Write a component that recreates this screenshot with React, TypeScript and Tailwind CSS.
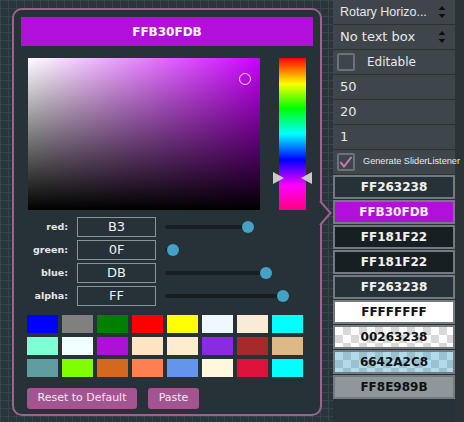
import React from 'react'

const swatches = [
  ['#0000ff', '#808080', '#008000', '#ff0000', '#ffff00', '#f0f8ff', '#faebd7', '#00ffff'],
  ['#7fffd4', '#f0ffff', '#ad10d6', '#ffe4c4', '#ffebcd', '#8a2be2', '#a52a2a', '#deb887'],
  ['#5f9ea0', '#7fff00', '#d2691e', '#ff7f50', '#6495ed', '#fff8dc', '#dc143c', '#00ffff'],
]

const channels = [
  { label: 'red:', value: 'B3', n: 0xb3 },
  { label: 'green:', value: '0F', n: 0x0f },
  { label: 'blue:', value: 'DB', n: 0xdb },
  { label: 'alpha:', value: 'FF', n: 0xff },
]

const items = [
  { text: 'FF263238', cls: 'bg-[#263238] text-[#f2f2f2]' },
  { text: 'FFB30FDB', cls: 'bg-[#b30fdb] text-[#f2f2f2]' },
  { text: 'FF181F22', cls: 'bg-[#181f22] text-[#f2f2f2]' },
  { text: 'FF181F22', cls: 'bg-[#181f22] text-[#f2f2f2]' },
  { text: 'FF263238', cls: 'bg-[#263238] text-[#f2f2f2]' },
  { text: 'FFFFFFFF', cls: 'bg-white text-[#111]' },
  {
    text: '00263238',
    cls: 'bg-[conic-gradient(#d8d8d8_25%,#ffffff_0_50%,#d8d8d8_0_75%,#ffffff_0)] bg-size-[16px_16px] text-[#111]',
  },
  {
    text: '6642A2C8',
    cls: 'bg-[conic-gradient(#9ac1d0_25%,#b3dae9_0_50%,#9ac1d0_0_75%,#b3dae9_0)] bg-size-[16px_16px] text-[#111]',
  },
  { text: 'FF8E989B', cls: 'bg-[#8e989b] text-[#111]' },
]

function UpDown() {
  return (
    <svg width="8" height="14" viewBox="0 0 8 14" className="mr-[9px]">
      <polygon points="4,1 7.5,5 0.5,5" fill="#0d0f10" />
      <polygon points="0.5,9 7.5,9 4,13" fill="#0d0f10" />
    </svg>
  )
}

function Row({ children, className = '' }: { children: React.ReactNode; className?: string }) {
  return (
    <div className={`h-[25px] flex items-center border-b border-[#2b3236] bg-[#3e464b] text-[#e8e8e8] ${className}`}>
      {children}
    </div>
  )
}

export default function App() {
  return (
    <div className="w-[464px] h-[422px] overflow-hidden flex bg-[#2a3539] bg-[linear-gradient(to_right,#37444a_1px,transparent_1px),linear-gradient(to_bottom,#37444a_1px,transparent_1px)] bg-size-[8px_8px] font-['DejaVu_Sans',sans-serif]">
      {/* colour selector popup */}
      <div className="relative mt-2 ml-3 w-[310px] h-[408px] shrink-0 rounded-[10px] border-2 border-[#9a6390] bg-[#263238] p-[7px]">
        <div className="h-[29px] bg-[#b30fdb] flex items-center justify-center text-white font-bold text-[12px]">
          FFB30FDB
        </div>

        <div className="mt-3 ml-[7px] flex">
          <div className="relative w-[232px] h-[152px] bg-[#cc00ff]">
            <div className="absolute inset-0 bg-[linear-gradient(to_right,#ffffff,transparent)]" />
            <div className="absolute inset-0 bg-[linear-gradient(to_bottom,transparent,#000000)]" />
            <div className="absolute left-[211px] top-[15px] w-[12px] h-[12px] rounded-full border border-[#f4d8f4]" />
          </div>
          <div className="relative ml-[19px] w-[27px] h-[152px] bg-[linear-gradient(to_bottom,#ff0000_0%,#ffff00_17%,#00ff00_33%,#00ffff_50%,#0000ff_67%,#ff00ff_84%,#ff0080_100%)]">
            <svg width="11" height="12" viewBox="0 0 11 12" className="absolute left-[-6px] top-[114px]">
              <polygon points="0,0 11,6 0,12" fill="#c9cacb" />
            </svg>
            <svg width="11" height="12" viewBox="0 0 11 12" className="absolute right-[-6px] top-[114px]">
              <polygon points="11,0 0,6 11,12" fill="#c9cacb" />
            </svg>
          </div>
        </div>

        <div className="mt-[7px] flex flex-col gap-[3px]">
          {channels.map((c) => (
            <div key={c.label} className="flex items-center h-[20px]">
              <div className="w-[47px] text-right text-[9.5px] font-bold text-[#e6e6e6]">{c.label}</div>
              <div className="ml-[9px] w-[79px] h-[20px] border border-[#8b9397] flex items-center justify-center text-[13px] text-[#f0f0f0]">
                {c.value}
              </div>
              <div className="relative ml-[9px] w-[126px] h-[20px]">
                <div
                  className="absolute left-0 top-[8px] h-[4px] rounded-full bg-[#181f22]"
                  style={{ width: (c.n / 255) * 117 + 1 }}
                />
                <div
                  className="absolute top-[4px] w-[12px] h-[12px] rounded-full bg-[#42a2c8]"
                  style={{ left: (c.n / 255) * 117 - 5 }}
                />
              </div>
            </div>
          ))}
        </div>

        <div className="mt-[9px] ml-[6px] flex flex-col gap-[4px]">
          {swatches.map((row, i) => (
            <div key={i} className="flex gap-[4px]">
              {row.map((col, j) => (
                <div key={j} className="w-[31px] h-[18px]" style={{ backgroundColor: col }} />
              ))}
            </div>
          ))}
        </div>

        <div className="mt-[11px] ml-[6px] flex gap-[11px]">
          <button className="w-[110px] h-[21px] rounded-[3px] bg-[#a35592] text-[#f3e6ef] text-[11px]">
            Reset to Default
          </button>
          <button className="w-[51px] h-[21px] rounded-[3px] bg-[#a35592] text-[#f3e6ef] text-[11px]">
            Paste
          </button>
        </div>

        {/* callout arrow */}
        <svg width="13" height="24" viewBox="0 0 13 24" className="absolute right-[-12px] top-[191px]">
          <polygon points="0,0 1,0 12,12 1,24 0,24" fill="#263238" />
          <polyline points="1,0 11.5,12 1,24" fill="none" stroke="#9a6390" strokeWidth="2" />
        </svg>
      </div>

      {/* property panel */}
      <div className="ml-[11px] w-[122px] shrink-0 flex flex-col bg-[#263238]">
        <Row className="justify-between text-[12px]">
          <span className="pl-[7px] font-['Liberation_Sans',sans-serif] text-[12.5px]">Rotary Horizo...</span>
          <UpDown />
        </Row>
        <Row className="justify-between text-[13px]">
          <span className="pl-[7px]">No text box</span>
          <UpDown />
        </Row>
        <Row className="text-[12px]">
          <div className="ml-[4px] w-[18px] h-[18px] rounded-[2px] border-2 border-[#6b7378]" />
          <span className="ml-[12px]">Editable</span>
        </Row>
        <Row className="text-[13px]">
          <span className="pl-[7px]">50</span>
        </Row>
        <Row className="text-[13px]">
          <span className="pl-[7px]">20</span>
        </Row>
        <Row className="text-[13px]">
          <span className="pl-[7px]">1</span>
        </Row>
        <Row className="whitespace-nowrap">
          <div className="ml-[4px] w-[18px] h-[18px] shrink-0 rounded-[2px] border-2 border-[#6b7378] flex items-center justify-center">
            <svg width="14" height="12" viewBox="0 0 14 12">
              <polyline points="1.5,6 5,10.5 12.5,1" fill="none" stroke="#c77bbb" strokeWidth="2" />
            </svg>
          </div>
          <span className="relative z-10 ml-[8px] font-['Liberation_Sans',sans-serif] text-[9.2px]">Generate SliderListener</span>
        </Row>
        <div className="flex flex-col gap-[1px]">
          {items.map((it, i) => (
            <div
              key={i}
              className={`h-[24px] border-2 border-[#737b80] flex items-center justify-center font-bold text-[12px] ${it.cls}`}
            >
              {it.text}
            </div>
          ))}
        </div>
      </div>
      <div className="flex-1 bg-[#2b3337]" />
    </div>
  )
}
